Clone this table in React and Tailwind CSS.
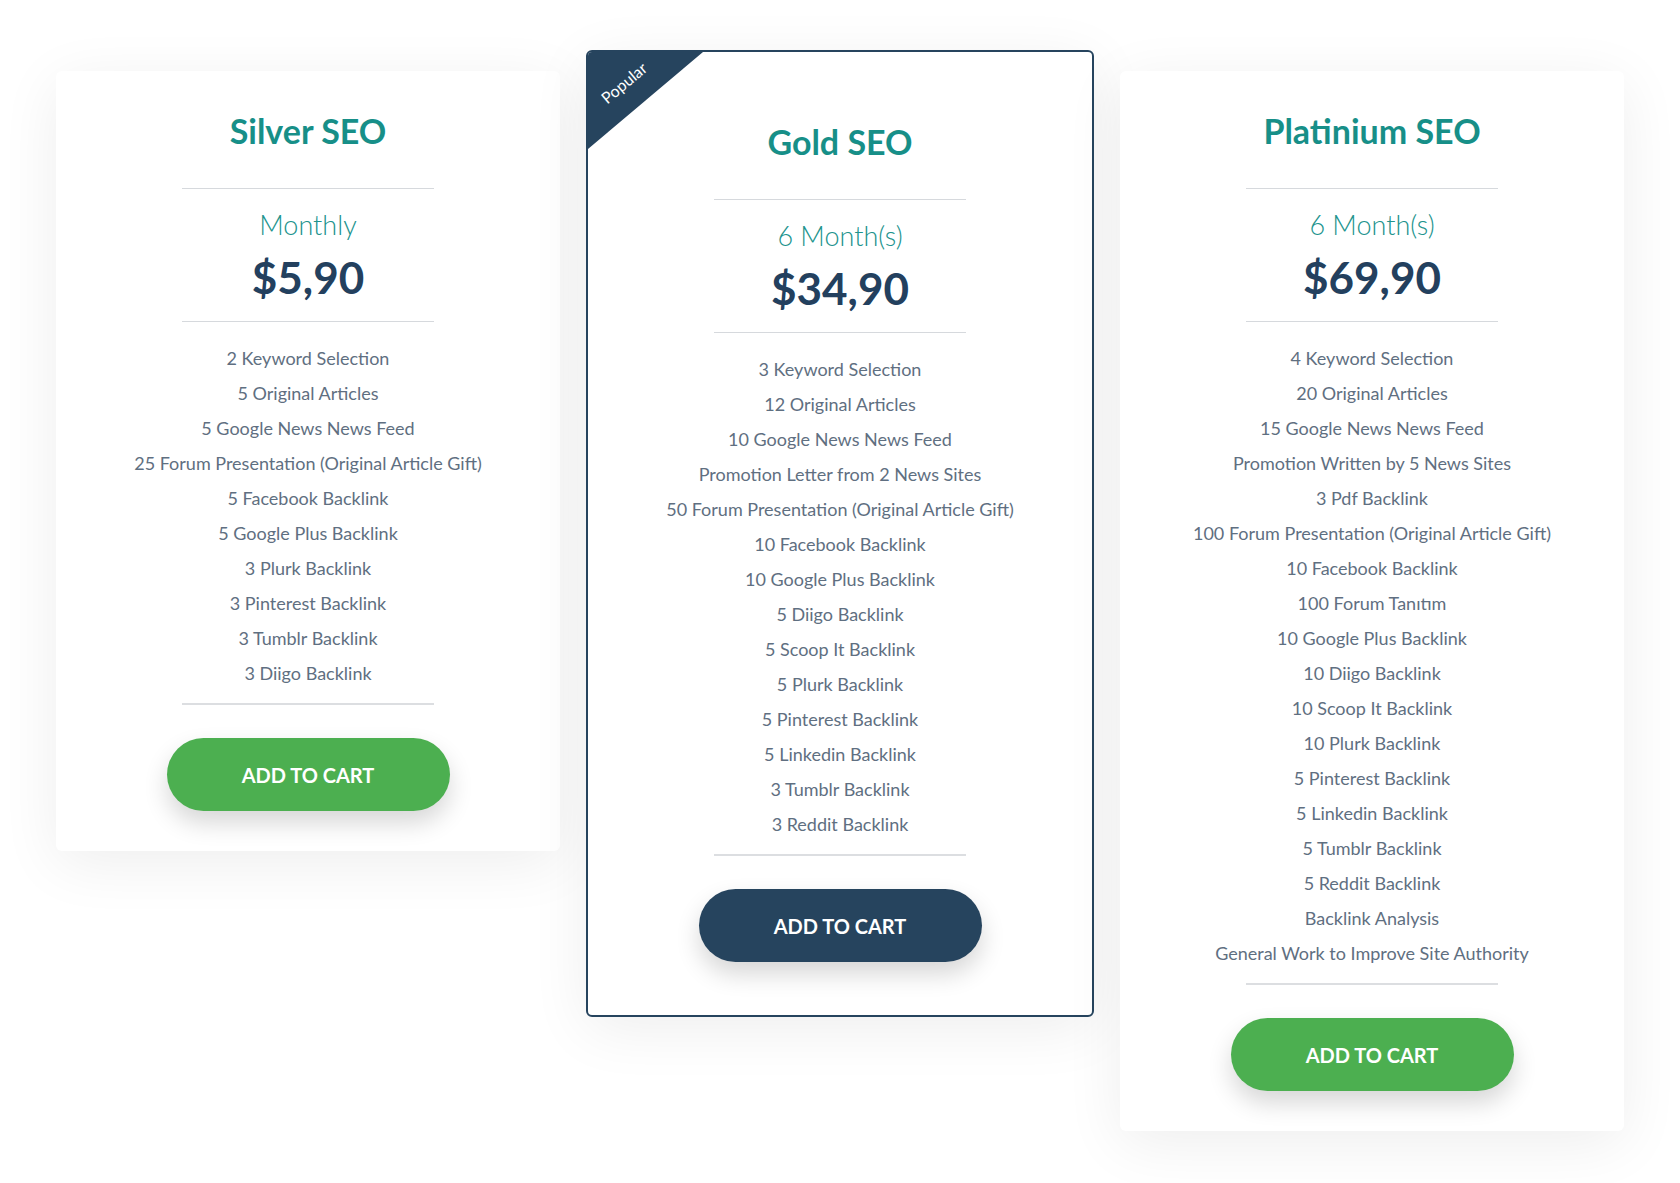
import React from 'react';

const plans = [
  {
    name: 'Silver SEO',
    period: 'Monthly',
    price: '$5,90',
    features: [
      '2 Keyword Selection',
      '5 Original Articles',
      '5 Google News News Feed',
      '25 Forum Presentation (Original Article Gift)',
      '5 Facebook Backlink',
      '5 Google Plus Backlink',
      '3 Plurk Backlink',
      '3 Pinterest Backlink',
      '3 Tumblr Backlink',
      '3 Diigo Backlink',
    ],
  },
  {
    name: 'Gold SEO',
    period: '6 Month(s)',
    price: '$34,90',
    popular: true,
    features: [
      '3 Keyword Selection',
      '12 Original Articles',
      '10 Google News News Feed',
      'Promotion Letter from 2 News Sites',
      '50 Forum Presentation (Original Article Gift)',
      '10 Facebook Backlink',
      '10 Google Plus Backlink',
      '5 Diigo Backlink',
      '5 Scoop It Backlink',
      '5 Plurk Backlink',
      '5 Pinterest Backlink',
      '5 Linkedin Backlink',
      '3 Tumblr Backlink',
      '3 Reddit Backlink',
    ],
  },
  {
    name: 'Platinium SEO',
    period: '6 Month(s)',
    price: '$69,90',
    features: [
      '4 Keyword Selection',
      '20 Original Articles',
      '15 Google News News Feed',
      'Promotion Written by 5 News Sites',
      '3 Pdf Backlink',
      '100 Forum Presentation (Original Article Gift)',
      '10 Facebook Backlink',
      '100 Forum Tanıtım',
      '10 Google Plus Backlink',
      '10 Diigo Backlink',
      '10 Scoop It Backlink',
      '10 Plurk Backlink',
      '5 Pinterest Backlink',
      '5 Linkedin Backlink',
      '5 Tumblr Backlink',
      '5 Reddit Backlink',
      'Backlink Analysis',
      'General Work to Improve Site Authority',
    ],
  },
];

const PlanCard = ({ plan }) => {
  const popular = plan.popular;
  return (
    <div
      className={`relative overflow-hidden rounded-md bg-white flex flex-col items-center shadow-[0_12px_60px_rgba(0,0,0,0.07)] ${
        popular
          ? 'w-[508px] border-2 border-[#26445e] pt-[68px] pb-[53px]'
          : 'w-[504px] mt-[21px] pt-[38px] pb-[40px]'
      }`}
    >
      {/* Popular ribbon */}
      {popular && (
        <div className="absolute left-0 top-0 w-[115px] h-[97px] bg-[#26445e] [clip-path:polygon(0_0,100%_0,0_100%)]">
          <span className="absolute left-[36px] top-[31px] -translate-x-1/2 -translate-y-1/2 -rotate-[40deg] text-white text-[16px] leading-none whitespace-nowrap">
            Popular
          </span>
        </div>
      )}

      <h2 className="text-[34px] leading-[44px] font-bold text-[#178f88]">{plan.name}</h2>
      <div className="w-[252px] h-px bg-[#d6d9dd] mt-[35px]" />

      <div className="mt-[18px] text-[27px] leading-[36px] font-light text-[#21938d]">{plan.period}</div>
      <div className="text-[44px] leading-[52px] font-bold text-[#23405e] mt-[8px]">{plan.price}</div>
      <div className="w-[252px] h-px bg-[#d6d9dd] mt-[18px]" />

      {/* Features */}
      <ul className="mt-[19px] flex flex-col items-center">
        {plan.features.map((f) => (
          <li key={f} className="text-[18px] leading-[35px] text-[#5f6f81] whitespace-nowrap">
            {f}
          </li>
        ))}
      </ul>
      <div className="w-[252px] h-[2px] bg-[#dcdee1] mt-[12px]" />

      <button
        className={`mt-[33px] w-[283px] h-[73px] rounded-full text-white text-[20px] font-bold shadow-[0_12px_24px_rgba(0,0,0,0.16)] ${
          popular ? 'bg-[#26445e]' : 'bg-[#4caf50]'
        }`}
      >
        ADD TO CART
      </button>
    </div>
  );
};

export default function App() {
  return (
    <div className="min-h-screen bg-white font-['Lato',sans-serif]">
      <div className="flex items-start pl-[56px] pt-[50px] gap-[26px] pb-[50px]">
        {plans.map((p) => (
          <PlanCard key={p.name} plan={p} />
        ))}
      </div>
    </div>
  );
}
